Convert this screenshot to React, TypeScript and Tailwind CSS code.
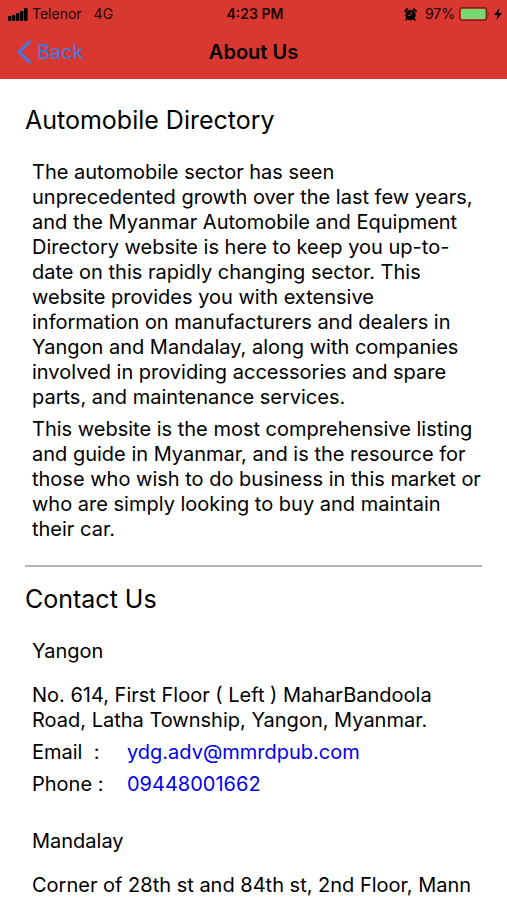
import { Fragment } from "react"

interface Office {
  city: string
  address: string[]
  email?: string
  phone?: string
}

const INTRO = [
  [
    "The automobile sector has seen",
    "unprecedented growth over the last few years,",
    "and the Myanmar Automobile and Equipment",
    "Directory website is here to keep you up-to-",
    "date on this rapidly changing sector. This",
    "website provides you with extensive",
    "information on manufacturers and dealers in",
    "Yangon and Mandalay, along with companies",
    "involved in providing accessories and spare",
    "parts, and maintenance services.",
  ],
  [
    "This website is the most comprehensive listing",
    "and guide in Myanmar, and is the resource for",
    "those who wish to do business in this market or",
    "who are simply looking to buy and maintain",
    "their car.",
  ],
]

const OFFICES: Office[] = [
  {
    city: "Yangon",
    address: ["No. 614, First Floor ( Left ) MaharBandoola", "Road, Latha Township, Yangon, Myanmar."],
    email: "ydg.adv@mmrdpub.com",
    phone: "09448001662",
  },
  {
    city: "Mandalay",
    address: ["Corner of 28th st and 84th st, 2nd Floor, Mann"],
  },
]

const Lines = ({ lines }: { lines: string[] }) => (
  <p className="whitespace-nowrap">
    {lines.map((line, i) => (
      <Fragment key={line}>
        {i > 0 && <br />}
        {line}
      </Fragment>
    ))}
  </p>
)

const StatusBar = () => (
  <div className="grid h-7 grid-cols-[1fr_auto_1fr] items-center pl-2 pr-[5px] text-sm text-[#1c0303]">
    <div className="flex items-center gap-1">
      <svg width="20" height="13" viewBox="0 0 20 13" aria-hidden="true">
        <rect x="0" y="8" width="3.4" height="5" rx="1.2" />
        <rect x="4" y="7" width="3.4" height="6" rx="1.2" />
        <rect x="8" y="5" width="3.4" height="8" rx="1.2" />
        <rect x="12" y="3" width="3.4" height="10" rx="1.2" />
        <rect x="16" y="0" width="3.6" height="13" rx="1.2" />
      </svg>
      <span>Telenor</span>
      <span className="ml-2">4G</span>
    </div>
    <span className="font-semibold">4:23 PM</span>
    <div className="flex items-center justify-end gap-1">
      <svg className="mr-1" width="13" height="13" viewBox="0 0 13 13" aria-hidden="true">
        <circle cx="6.5" cy="7" r="5.2" />
        <path d="M1 3.2 3.3 1M12 3.2 9.7 1" stroke="#000" strokeWidth="1.8" strokeLinecap="round" />
        <path d="M3 10.5l-1 1.6M10 10.5l1 1.6" stroke="#000" strokeWidth="1.4" strokeLinecap="round" />
        <path d="M7.8 4 6.5 7.2H4" fill="none" stroke="#d93831" strokeWidth="1" />
      </svg>
      <span>97%</span>
      <svg width="31" height="14" viewBox="0 0 31 14" aria-hidden="true">
        <rect x=".7" y=".7" width="27" height="12.6" rx="2.8" fill="none" stroke="#7f1d16" strokeWidth="1.3" />
        <rect x="2" y="2" width="24.4" height="10" rx="1.2" fill="#76d672" />
        <path d="M29.2 5q1.8 2 0 4z" fill="#7f1d16" />
      </svg>
      <svg width="8" height="12" viewBox="0 0 8 12" aria-hidden="true">
        <path d="M5.5 0 0 7h3.5L2.5 12 8 5H4.5z" />
      </svg>
    </div>
  </div>
)

const App = () => (
  <div className="h-screen overflow-hidden bg-white font-['Inter',sans-serif] text-black">
    <header className="bg-[#d93831] pb-1">
      <StatusBar />
      <nav className="grid h-[47px] grid-cols-[1fr_auto_1fr] items-center px-4 text-xl">
        <button type="button" className="flex items-center gap-1 justify-self-start text-[#3f78e4]">
          <svg width="17" height="26" viewBox="0 0 17 26" fill="none" stroke="currentColor" strokeWidth="3" aria-hidden="true">
            <path d="M14.5 2 3 13l11.5 11" />
          </svg>
          Back
        </button>
        <h1 className="font-semibold">About Us</h1>
      </nav>
    </header>

    <main className="px-[25px] pt-[25px] text-xl leading-[25px]">
      <section>
        <h2 className="text-[25px] leading-8">Automobile Directory</h2>
        <div className="mt-6 space-y-[7px] px-[7px]">
          {INTRO.map((lines) => (
            <Lines key={lines[0]} lines={lines} />
          ))}
        </div>
      </section>

      <hr className="mt-[23px] border-t-2 border-[#b4b4b4]" />

      <section>
        <h2 className="mt-4 text-[25px] leading-8">Contact Us</h2>
        {OFFICES.map((office) => (
          <div key={office.city} className="mb-8 mt-6 px-[7px]">
            <h3>{office.city}</h3>
            <div className="mt-[19px]">
              <Lines lines={office.address} />
            </div>
            {office.email && (
              <p className="mt-[7px] flex">
                <span className="w-[95px] whitespace-pre">Email  :</span>
                <a className="text-[#0000ee]" href={`mailto:${office.email}`}>{office.email}</a>
              </p>
            )}
            {office.phone && (
              <p className="mt-[7px] flex">
                <span className="w-[95px]">Phone :</span>
                <a className="text-[#0000ee]" href={`tel:${office.phone}`}>{office.phone}</a>
              </p>
            )}
          </div>
        ))}
      </section>
    </main>
  </div>
)

export default App
